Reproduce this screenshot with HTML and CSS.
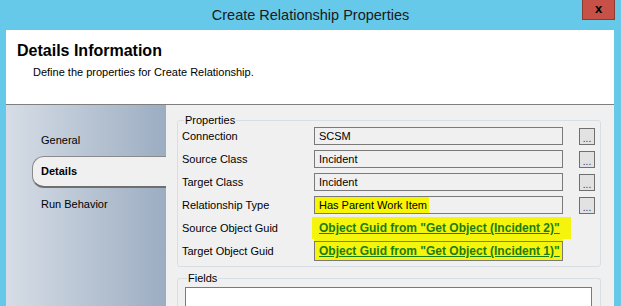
FILE: index.html
```html
<!DOCTYPE html>
<html>
<head>
<link rel="stylesheet" href="styles.css">
</head>
<body>

<!-- Title bar -->
<div class="titlebar">
  <span></span>
  <span class="title">Create Relationship Properties</span>
  <span class="close">x</span>
</div>

<div class="window">

  <!-- Header -->
  <div class="header">
    <h2>Details Information</h2>
    <p>Define the properties for Create Relationship.</p>
  </div>

  <div class="main">

    <!-- Left navigation -->
    <div class="nav">
      <div class="nav-item">General</div>
      <div class="nav-item active">Details</div>
      <div class="nav-item">Run Behavior</div>
    </div>

    <!-- Page content -->
    <div class="content">
      <fieldset class="group">
        <legend>Properties</legend>
        <div class="rows">
          <span class="label">Connection</span>
          <span class="field">SCSM</span>
          <span class="dots">...</span>

          <span class="label">Source Class</span>
          <span class="field">Incident</span>
          <span class="dots">...</span>

          <span class="label">Target Class</span>
          <span class="field">Incident</span>
          <span class="dots">...</span>

          <span class="label">Relationship Type</span>
          <span class="field"><span class="mark">Has Parent Work Item</span></span>
          <span class="dots">...</span>

          <span class="label">Source Object Guid</span>
          <span class="field guid guid-a"><span class="link">Object Guid from "Get Object (Incident 2)"</span></span>
          <span></span>

          <span class="label">Target Object Guid</span>
          <span class="field guid guid-b"><span class="link">Object Guid from "Get Object (Incident 1)"</span></span>
          <span></span>
        </div>
      </fieldset>

      <fieldset class="group fields">
        <legend>Fields</legend>
        <div class="list"></div>
      </fieldset>
    </div>

  </div>
</div>

</body>
</html>
```

FILE: styles.css
```css
/* Window frame */
html {
    overflow: hidden;
}

body {
    margin: 0;
    background-color: #66c9e9;
    font-family: "Liberation Sans", Arial, sans-serif;
    font-size: 11px;
    color: #000;
    height: 306px;
    overflow: hidden;
}

.titlebar {
    display: grid;
    grid-template-columns: 1fr auto 1fr;
    height: 30px;
}

.title {
    font-size: 14.5px;
    color: #1a1a1a;
    line-height: 30px;
}

.close {
    justify-self: end;
    width: 31px;
    height: 19px;
    margin-right: 6px;
    background-color: #c75147;
    border: 1px solid #8c3b33;
    border-top: none;
    text-align: center;
    font-weight: bold;
    font-size: 13px;
    line-height: 17px;
}

.window {
    margin: 0 7px 0 6px;
    background-color: #fff;
    height: 276px;
    display: flex;
    flex-direction: column;
    overflow: hidden;
}

/* Header */
.header {
    flex: none;
    height: 75px;
    border-bottom: 1px solid #7f7f7f;
    box-sizing: border-box;
    padding: 11px 0 0 11px;
}

.header h2 {
    margin: 0;
    font-size: 16px;
    line-height: 20px;
}

.header p {
    margin: 5px 0 0 16px;
}

.main {
    flex: 1;
    display: flex;
    min-height: 0;
}

/* Navigation */
.nav {
    flex: none;
    width: 160px;
    padding-top: 19px;
    background: linear-gradient(to right, #d6dde6, #9cadc2);
}

.nav-item {
    height: 32px;
    line-height: 32px;
    padding-left: 35px;
}

.nav-item.active {
    margin-left: 26px;
    padding-left: 8px;
    font-weight: bold;
    background-color: #f0f0f0;
    border: 1px solid #8a8a8a;
    border-right: none;
    border-bottom: 2px solid #6f6f6f;
    border-radius: 12px 0 0 12px;
    height: 29px;
    line-height: 29px;
}

/* Content */
.content {
    flex: 1;
    min-width: 0;
    background-color: #f0f0f0;
    padding-top: 9px;
    overflow: hidden;
}

.group {
    margin: 0 13px 0 11px;
    padding: 0 5px 6px 4px;
    border: 1px solid #d7dfe5;
    border-radius: 3px;
}

.group legend {
    padding: 0 1px;
    margin-left: 2px;
    line-height: 13px;
}

.rows {
    display: grid;
    grid-template-columns: 116px 249px 16px;
    column-gap: 16px;
    row-gap: 5px;
    grid-auto-rows: 18px;
    align-items: center;
}

.field {
    box-sizing: border-box;
    height: 18px;
    border: 1px solid #7a7a7a;
    padding-left: 4px;
    line-height: 16px;
    white-space: nowrap;
}

.mark {
    display: inline-block;
    margin-left: -4px;
    padding: 0 2px 0 4px;
    background-color: #f7f500;
    height: 16px;
}

.dots {
    box-sizing: border-box;
    height: 17px;
    border: 1px solid #6f6f6f;
    background-color: #e2e2e2;
    color: #30306a;
    text-align: center;
    line-height: 19px;
    font-size: 10px;
}

/* Highlighted guid fields */
.guid {
    background-color: #f5f40c;
    overflow: visible;
}

.guid-a {
    border-color: #f5f40c;
    box-shadow: 0 0 0 2px #f5f40c;
    margin-right: -6px;
}

.guid-b {
    height: 20px;
    line-height: 18px;
    box-shadow: 0 -2px 0 0 #f5f40c;
}

.link {
    color: #1b7d12;
    font-size: 12px;
    font-weight: bold;
    text-decoration: underline;
}

.fields {
    margin-top: 5px;
    padding: 2px 8px 0 7px;
    border-bottom: none;
}

.list {
    height: 30px;
    background-color: #fff;
    border: 1px solid #7a7a7a;
}
```
